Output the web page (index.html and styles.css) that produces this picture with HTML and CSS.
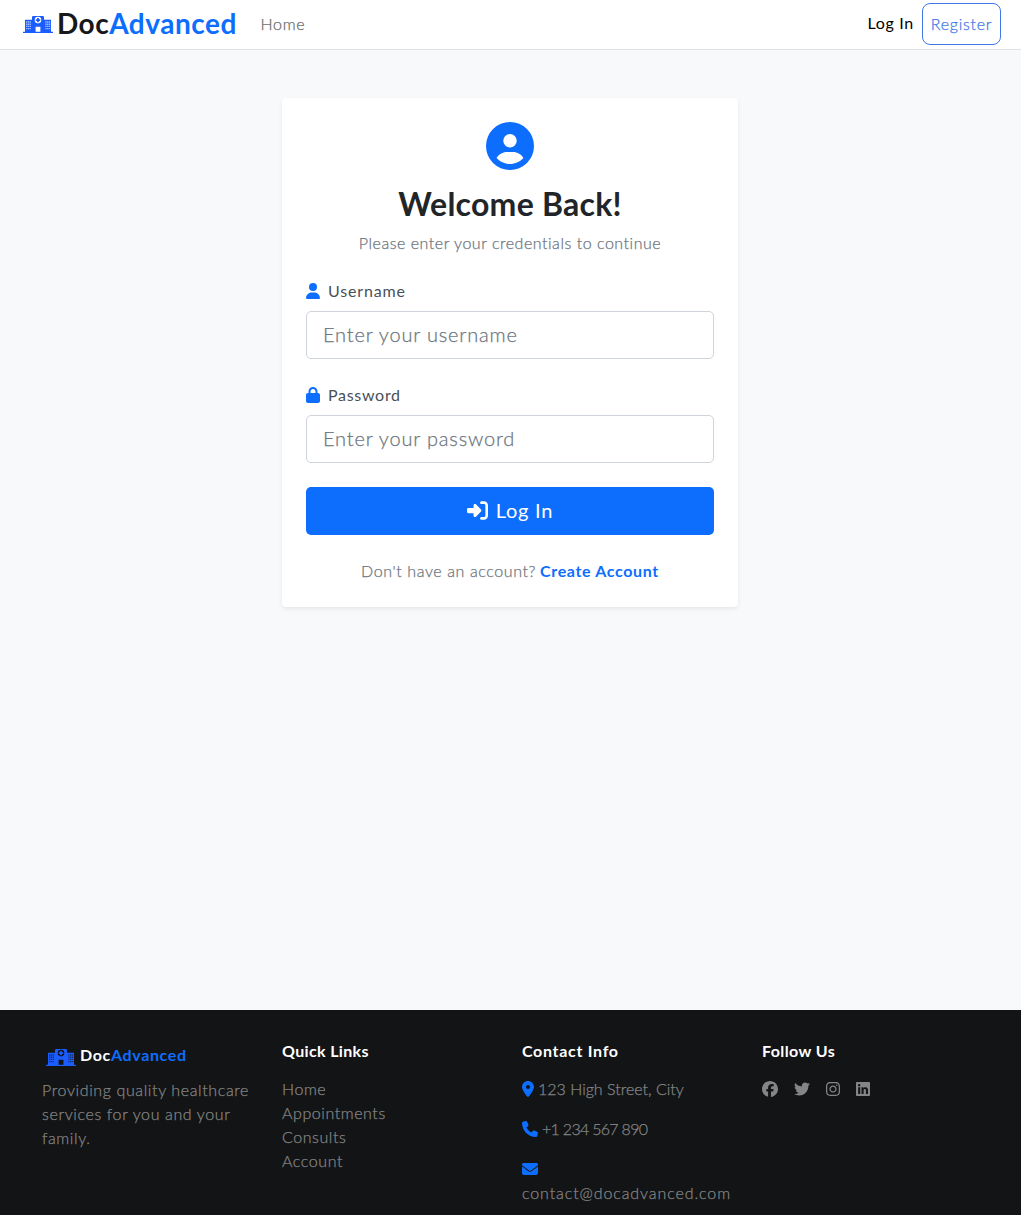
FILE: index.html
```
<!DOCTYPE html>
<html lang="en">
<head>
<meta charset="utf-8">
<title>DocAdvanced</title>
<link rel="stylesheet" href="styles.css">
</head>
<body>
<svg class="defs" width="0" height="0" aria-hidden="true">
  <symbol id="hospital" viewBox="0 0 30 17">
    <path fill-rule="evenodd" d="M0 15.700h2V3.800h7V1.200Q9 0 10.200 0h9.600Q21 0 21 1.200V3.800h7v11.900h2V17H0zM12.600 15.700h4.800V10.800h-4.800zM15 .8a3.300 3.300 0 1 0 0 6.600 3.300 3.300 0 0 0 0-6.600z"/>
    <path d="M14.100 1.900h1.800v1.300h1.300V5h-1.300v1.300h-1.800V5h-1.300V3.200h1.300z"/>
    <path class="windows" d="M3 6h5M3 8.200h5M3 10.400h5M3 12.600h5M22.300 6h5M22.300 8.200h5M22.300 10.400h5M22.300 12.600h5"/>
  </symbol>
</svg>

<nav class="navbar">
  <a class="brand"><svg class="hospital"><use href="#hospital"/></svg><span class="brand-text">Doc<span class="blue">Advanced</span></span></a>
  <a class="nav-home">Home</a>
  <a class="nav-login">Log In</a>
  <a class="nav-register">Register</a>
</nav>

<main class="main">
  <form class="card">
    <svg class="avatar" viewBox="0 0 512 512"><path d="M399 384.200C376.900 345.800 335.400 320 288 320H224c-47.400 0-88.900 25.800-111 64.200c35.200 39.200 86.200 63.800 143 63.800s107.800-24.700 143-63.800zM0 256a256 256 0 1 1 512 0A256 256 0 1 1 0 256zm256 16a72 72 0 1 0 0-144 72 72 0 1 0 0 144z"/></svg>
    <h2 class="title">Welcome Back!</h2>
    <p class="subtitle">Please enter your credentials to continue</p>
    <label class="label"><svg viewBox="0 0 448 512"><path d="M224 256A128 128 0 1 0 224 0a128 128 0 1 0 0 256zm-45.700 48C79.800 304 0 383.800 0 482.300C0 498.700 13.300 512 29.700 512H418.300c16.400 0 29.700-13.300 29.700-29.700C448 383.800 368.200 304 269.700 304H178.300z"/></svg><span class="t-username">Username</span></label>
    <input class="input" type="text" placeholder="Enter your username">
    <label class="label"><svg viewBox="0 0 448 512"><path d="M144 144v48H304V144c0-44.200-35.800-80-80-80s-80 35.800-80 80zM80 192V144C80 64.500 144.500 0 224 0s144 64.500 144 144v48h16c35.300 0 64 28.700 64 64V448c0 35.300-28.700 64-64 64H64c-35.300 0-64-28.700-64-64V256c0-35.300 28.700-64 64-64H80z"/></svg><span class="t-password">Password</span></label>
    <input class="input" type="password" placeholder="Enter your password">
    <button class="submit" type="button"><svg viewBox="0 0 512 512"><path d="M217.900 105.900L340.700 228.700c7.200 7.200 11.300 17.100 11.300 27.300s-4.100 20.100-11.300 27.300L217.900 406.100c-6.400 6.400-15 9.900-24 9.900c-18.700 0-33.900-15.200-33.900-33.900l0-62.100L32 320c-17.700 0-32-14.300-32-32l0-64c0-17.700 14.300-32 32-32l128 0 0-62.100c0-18.700 15.200-33.900 33.900-33.900c9 0 17.600 3.600 24 9.900zM352 416l64 0c17.700 0 32-14.300 32-32l0-256c0-17.700-14.300-32-32-32l-64 0c-17.700 0-32-14.300-32-32s14.300-32 32-32l64 0c53 0 96 43 96 96l0 256c0 53-43 96-96 96l-64 0c-17.700 0-32-14.300-32-32s14.300-32 32-32z"/></svg><span>Log In</span></button>
    <p class="signup"><span class="question">Don't have an account?</span><a class="create">Create Account</a></p>
  </form>
</main>

<footer class="footer">
  <section class="col">
    <div class="foot-brand"><svg class="hospital"><use href="#hospital"/></svg><span>Doc<span class="blue">Advanced</span></span></div>
    <p class="about">Providing quality healthcare<br>services for you and your<br>family.</p>
  </section>
  <section class="col">
    <h5 class="h-links">Quick Links</h5>
    <ul class="links">
      <li>Home</li>
      <li>Appointments</li>
      <li>Consults</li>
      <li>Account</li>
    </ul>
  </section>
  <section class="col">
    <h5 class="h-contact">Contact Info</h5>
    <p class="contact address"><svg class="pin" viewBox="0 0 384 512"><path d="M215.700 499.200C267 435 384 279.400 384 192C384 86 298 0 192 0S0 86 0 192c0 87.400 117 243 168.300 307.200c12.300 15.300 35.100 15.300 47.400 0zM192 128a64 64 0 1 1 0 128 64 64 0 1 1 0-128z"/></svg>123 High Street, City</p>
    <p class="contact phone"><svg viewBox="0 0 512 512"><path d="M164.900 24.600c-7.700-18.600-28-28.500-47.400-23.200l-88 24C12.100 30.200 0 46 0 64C0 311.400 200.600 512 448 512c18 0 33.800-12.100 38.600-29.500l24-88c5.300-19.400-4.600-39.700-23.200-47.400l-96-40c-16.300-6.800-35.200-2.100-46.300 11.600L304.700 368C234.300 334.700 177.300 277.700 144 207.300L193.300 167c13.700-11.200 18.400-30 11.600-46.300l-40-96z"/></svg>+1 234 567 890</p>
    <p class="contact email"><svg viewBox="0 0 512 512"><path d="M48 64C21.500 64 0 85.500 0 112c0 15.100 7.100 29.300 19.200 38.400L236.800 313.600c11.400 8.500 27 8.500 38.400 0L492.800 150.400c12.100-9.100 19.200-23.300 19.200-38.400c0-26.500-21.500-48-48-48H48zM0 176V384c0 35.300 28.700 64 64 64H448c35.300 0 64-28.700 64-64V176L294.400 339.200c-22.800 17.100-54 17.100-76.800 0L0 176z"/></svg><br>contact@docadvanced.com</p>
  </section>
  <section class="col">
    <h5 class="h-follow">Follow Us</h5>
    <div class="social">
      <svg class="w16" viewBox="0 0 512 512"><path d="M512 256C512 114.600 397.400 0 256 0S0 114.600 0 256C0 376 82.700 476.800 194.200 504.500V334.200H141.400V256h52.800V222.300c0-87.100 39.400-127.500 125-127.500c16.200 0 44.200 3.200 55.700 6.400V172c-6-.6-16.500-1-29.600-1c-42 0-58.200 15.900-58.200 57.200V256h83.600l-14.400 78.200H287V510.100C413.800 494.800 512 386.900 512 256z"/></svg>
      <svg class="w16" viewBox="0 0 512 512"><path d="M459.370 151.716c.325 4.548.325 9.097.325 13.645 0 138.720-105.583 298.558-298.558 298.558-59.452 0-114.680-17.219-161.137-47.106 8.447.974 16.568 1.299 25.340 1.299 49.055 0 94.213-16.568 130.274-44.832-46.132-.975-84.792-31.188-98.112-72.772 6.498.974 12.995 1.624 19.818 1.624 9.421 0 18.843-1.300 27.614-3.573-48.081-9.747-84.143-51.980-84.143-102.985v-1.299c13.969 7.797 30.214 12.670 47.431 13.319-28.264-18.843-46.781-51.005-46.781-87.391 0-19.492 5.197-37.360 14.294-52.954 51.655 63.675 129.300 105.258 216.365 109.807-1.624-7.797-2.599-15.918-2.599-24.040 0-57.828 46.782-104.934 104.934-104.934 30.213 0 57.502 12.670 76.670 33.137 23.715-4.548 46.456-13.320 66.599-25.340-7.798 24.366-24.366 44.833-46.132 57.827 21.117-2.273 41.584-8.122 60.426-16.243-14.292 20.791-32.161 39.308-52.628 54.253z"/></svg>
      <svg class="w14" viewBox="0 0 448 512"><path d="M224.100 141c-63.600 0-114.900 51.300-114.900 114.900s51.300 114.900 114.900 114.900S339 319.500 339 255.900 287.700 141 224.100 141zm0 189.600c-41.100 0-74.700-33.500-74.700-74.700s33.500-74.700 74.700-74.700 74.700 33.500 74.700 74.700-33.600 74.700-74.700 74.700zm146.400-194.300c0 14.900-12 26.800-26.800 26.800-14.900 0-26.800-12-26.800-26.800s12-26.800 26.800-26.800 26.800 12 26.800 26.800zm76.100 27.200c-1.700-35.900-9.900-67.700-36.200-93.900-26.200-26.200-58-34.400-93.900-36.200-37-2.100-147.900-2.100-184.900 0-35.800 1.700-67.600 9.900-93.900 36.100s-34.400 58-36.200 93.900c-2.100 37-2.100 147.900 0 184.900 1.700 35.900 9.900 67.700 36.200 93.900s58 34.400 93.900 36.200c37 2.100 147.900 2.100 184.900 0 35.900-1.700 67.700-9.900 93.900-36.200 26.200-26.200 34.400-58 36.200-93.900 2.100-37 2.100-147.800 0-184.800zM398.800 388c-7.800 19.600-22.900 34.700-42.600 42.600-29.500 11.700-99.500 9-132.100 9s-102.700 2.600-132.100-9c-19.600-7.800-34.700-22.900-42.600-42.600-11.700-29.500-9-99.500-9-132.100s-2.600-102.700 9-132.100c7.800-19.600 22.900-34.700 42.600-42.600 29.500-11.700 99.500-9 132.100-9s102.700-2.600 132.100 9c19.600 7.800 34.700 22.900 42.600 42.600 11.700 29.500 9 99.500 9 132.100s2.700 102.700-9 132.100z"/></svg>
      <svg class="w14" viewBox="0 0 448 512"><path d="M416 32H31.900C14.300 32 0 46.500 0 64.300v383.400C0 465.500 14.300 480 31.900 480H416c17.600 0 32-14.500 32-32.300V64.300c0-17.800-14.400-32.300-32-32.300zM135.400 416H69V202.200h66.500V416zm-33.200-243c-21.300 0-38.500-17.300-38.500-38.500S80.900 96 102.200 96c21.200 0 38.500 17.300 38.500 38.500 0 21.300-17.200 38.500-38.500 38.500zm282.100 243h-66.400V312c0-24.800-.5-56.700-34.500-56.700-34.600 0-39.900 27-39.900 54.900V416h-66.400V202.200h63.700v29.200h.9c8.900-16.800 30.600-34.500 62.900-34.500 67.200 0 79.700 44.300 79.700 101.900V416z"/></svg>
    </div>
  </section>
</footer>
</body>
</html>
```
FILE: styles.css
```
* { box-sizing: border-box; }

body {
  margin: 0;
  height: 1215px;
  overflow: hidden;
  display: flex;
  flex-direction: column;
  background: #f8f9fa;
  font: 300 16px/24px Lato, "Open Sans", sans-serif;
  color: #212529;
}

h2, h5, p, ul { margin: 0; padding: 0; }
ul { list-style: none; }
a, h5, label, button, li, p { white-space: nowrap; }
svg { fill: currentColor; flex: none; }
.defs { position: absolute; }
.blue { color: #0d6efd; }

/* thickens the light weight a little */
.nav-home, .nav-register, .subtitle, .input, .question, .about, .links, .contact {
  -webkit-text-stroke: .25px currentColor;
}

.hospital { --pane: #fff; width: 30px; height: 17px; color: #1b5cff; }
.windows { fill: none; stroke: var(--pane); stroke-opacity: .6; stroke-width: 1.400; stroke-dasharray: 1.300 .5; }

.navbar {
  display: flex;
  align-items: center;
  height: 50px;
  padding: 0 20px 1px 23px;
  background: #fff;
  border-bottom: 1px solid #dee2e6;
}
.brand { display: flex; align-items: center; gap: 4px; width: 237.500px; }
.brand-text { padding-bottom: 2px; font-size: 28px; font-weight: 700; line-height: 40px; letter-spacing: .5px; color: #16181b; }
.nav-home { letter-spacing: .7px; color: #6c6c6c; }
.nav-login { margin-left: auto; margin-right: 8px; padding-bottom: 2px; font-weight: 400; letter-spacing: .7px; color: #000; }
.nav-register {
  width: 79px;
  height: 42px;
  border: 1px solid #3f78e6;
  border-radius: 8px;
  line-height: 40px;
  text-align: center;
  letter-spacing: .75px;
  color: #3f78e6;
}

.main { flex: 1; padding-top: 48px; }
.card {
  display: flex;
  flex-direction: column;
  width: 456px;
  height: 509px;
  margin: 0 auto 0 282px;
  padding: 24px;
  background: #fff;
  border-radius: 4px;
  box-shadow: 0 2px 4px rgba(0, 0, 0, .075);
}
.avatar { width: 48px; height: 48px; align-self: center; color: #0d6efd; }
.title { margin-top: 15px; font-size: 32px; font-weight: 700; line-height: 38px; letter-spacing: .25px; text-align: center; }
.subtitle { margin: 8px 0 24px; letter-spacing: .53px; text-align: center; color: #6c757d; }
.label { display: flex; align-items: center; gap: 8px; margin-bottom: 8px; font-weight: 400; color: #495057; }
.label svg { width: 14px; height: 16px; color: #0d6efd; }
.t-username { letter-spacing: .85px; }
.t-password { letter-spacing: .7px; }
.input {
  height: 48px;
  margin-bottom: 24px;
  padding: 0 16px 2px;
  border: 1px solid #ced4da;
  border-radius: 5px;
  font: 300 20px/30px Lato, "Open Sans", sans-serif;
  letter-spacing: .82px;
}
.input::placeholder { color: #6c757d; opacity: 1; }
.submit {
  display: flex;
  align-items: center;
  justify-content: center;
  gap: 8px;
  height: 48px;
  padding-bottom: 3px;
  border: 0;
  border-radius: 5px;
  background: #0d6efd;
  color: #fff;
  font: 400 20px/30px Lato, "Open Sans", sans-serif;
  letter-spacing: .75px;
}
.submit svg { width: 21px; height: 21px; }
.signup { display: flex; justify-content: center; gap: 4px; margin-top: 24px; color: #6c757d; }
.question { letter-spacing: .6px; }
.create { font-weight: 700; letter-spacing: .65px; color: #0d6efd; }

.footer {
  display: grid;
  grid-template-columns: repeat(4, 240px);
  height: 205px;
  padding: 31px 30px 0;
  background: #121416;
  color: #858585;
}
.col { padding: 0 12px; }
.col h5 { margin-bottom: 17px; font-size: 16px; font-weight: 700; line-height: 19px; color: #fff; }
.col .h-links { letter-spacing: .35px; }
.col .h-contact { letter-spacing: .7px; }
.col .h-follow { letter-spacing: .4px; }
.foot-brand { display: flex; align-items: center; gap: 4px; height: 28px; padding-left: 4px; font-weight: 700; letter-spacing: .65px; color: #fff; }
.foot-brand .hospital { --pane: #121416; margin-top: 4px; }
.about { margin-top: 9px; letter-spacing: .62px; }
.links { letter-spacing: .57px; }
.contact { margin-bottom: 16px; }
.phone { letter-spacing: -.7px; }
.email { letter-spacing: .9px; }
.contact svg { width: 16px; height: 16px; margin-right: 4px; vertical-align: -2px; color: #0d6efd; stroke: none; }
.contact .pin { width: 12px; }
.social { display: flex; gap: 16px; padding-top: 4px; }
.w16 { width: 16px; height: 16px; }
.w14 { width: 14px; height: 16px; }
```
